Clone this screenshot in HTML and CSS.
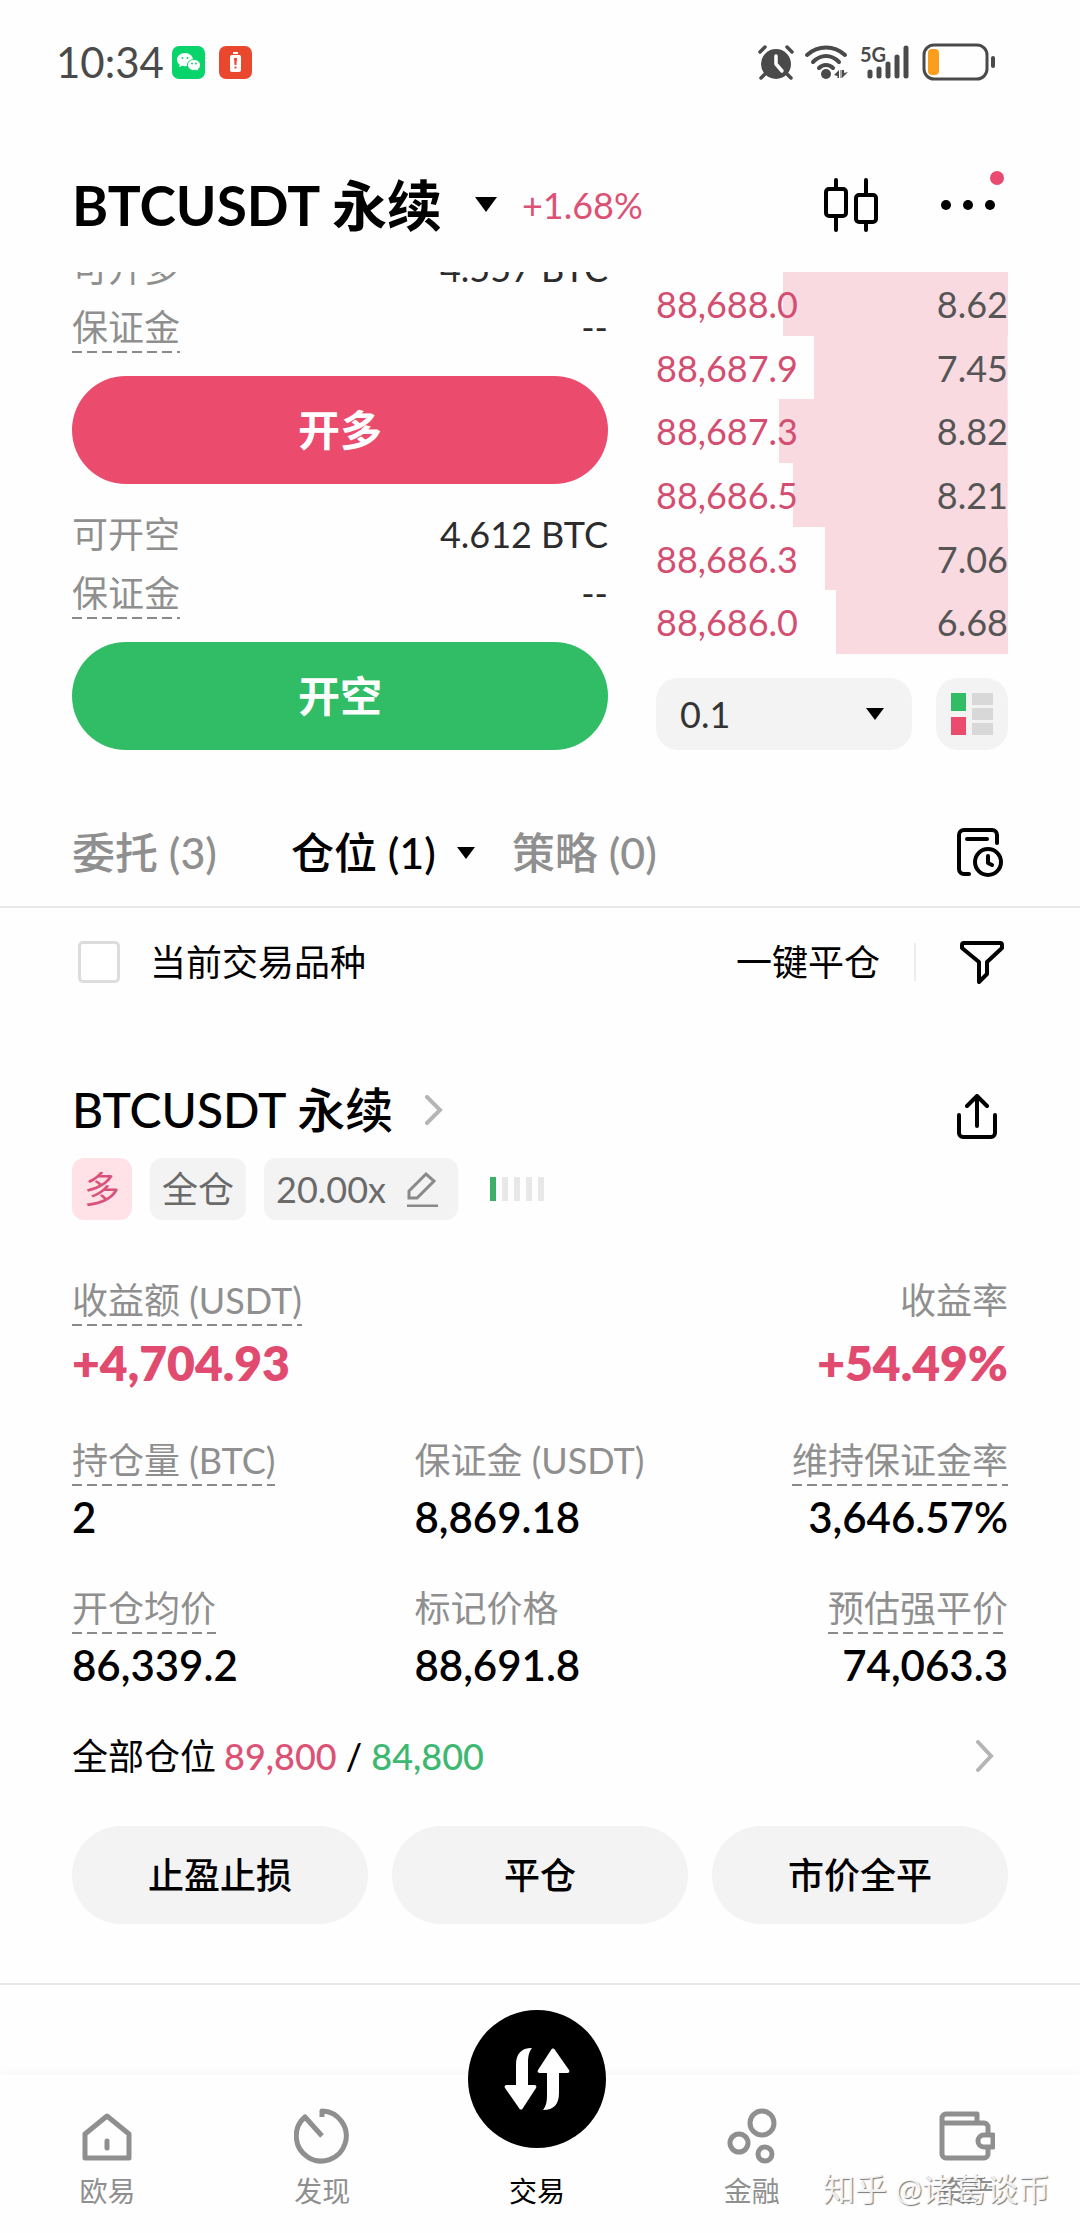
FILE: index.html
```html
<!DOCTYPE html>
<html lang="zh-CN">

<head>
    <meta charset="UTF-8">
    <meta name="viewport" content="width=device-width, initial-scale=1.0">
    <title>BTCUSDT 永续</title>
    <link rel="stylesheet" href="styles.css">
</head>

<body>
    <!-- 状态栏 -->
    <div class="status-bar">
        <span class="time">10:34</span>
        <svg class="app-icon" width="33" height="33" viewBox="0 0 33 33">
            <rect width="33" height="33" rx="7" fill="#07d46b" />
            <path d="M13 7c-4.600 0-8 3-8 6.700 0 2 1.100 3.700 2.800 5l-.7 2.600 3-1.500c.9.3 1.900.4 2.900.4 4.600 0 8-2.900 8-6.500S17.600 7 13 7z" fill="#fff" />
            <path d="M22 13.500c-3.600 0-6.500 2.400-6.500 5.500s2.900 5.500 6.500 5.500c.8 0 1.500-.1 2.200-.3l2.600 1.300-.6-2.200c1.500-1 2.300-2.600 2.300-4.300 0-3.100-2.900-5.500-6.500-5.500z" fill="#fff" stroke="#07d46b" stroke-width="1" />
            <g fill="#07d46b">
                <circle cx="10.500" cy="12" r="1" />
                <circle cx="15.500" cy="12" r="1" />
                <circle cx="20" cy="17.500" r=".9" />
                <circle cx="24" cy="17.500" r=".9" />
            </g>
        </svg>
        <svg class="app-icon alert" width="33" height="33" viewBox="0 0 33 33">
            <rect width="33" height="33" rx="7" fill="#e9482f" />
            <path d="M14 6h5v2h-5zM13 9h7a2 2 0 0 1 2 2v13a2 2 0 0 1-2 2h-7a2 2 0 0 1-2-2V11a2 2 0 0 1 2-2z" fill="#fff" />
            <path d="M15 12h3l-.6 7h-1.800zM15.500 20.500h2v2h-2z" fill="#e9482f" />
        </svg>
        <div class="status-right">
            <svg width="36" height="36" viewBox="0 0 36 36">
                <circle cx="18" cy="20" r="15" fill="#4a4a4a" />
                <path d="M2 8l5-5M34 8l-5-5M7 30l-4 4M29 30l4 4" stroke="#4a4a4a" stroke-width="3.500" stroke-linecap="round" />
                <path d="M18 12v8l6 7" fill="none" stroke="#fff" stroke-width="3.500" stroke-linecap="round" stroke-linejoin="round" />
            </svg>
            <svg width="46" height="36" viewBox="0 0 46 36">
                <g fill="none" stroke="#4a4a4a" stroke-width="4" stroke-linecap="round">
                    <path d="M3 11c11-10 27-10 38 0" />
                    <path d="M9 18c8-8 18-8 26 0" />
                    <path d="M15 24c4-4 10-4 14 0" />
                </g>
                <circle cx="22" cy="30" r="5" fill="#4a4a4a" />
                <path d="M35 26v8h-1.500v-2L30 31zM38 34v-8h2v3l4-1zM36.500 26h1v8h-1z" fill="#4a4a4a" />
            </svg>
            <svg width="52" height="36" viewBox="0 0 52 36">
                <text class="net-text" x="0" y="18">5G</text>
                <path d="M10 28v4M19 25v7M28 20v12M37 13v19M46 4v28" stroke="#4a4a4a" stroke-width="5" stroke-linecap="round" />
            </svg>
            <svg width="74" height="38" viewBox="0 0 74 38">
                <rect x="2" y="2" width="63" height="34" rx="10" fill="none" stroke="#4a4a4a" stroke-width="3" />
                <rect x="6" y="6" width="11" height="26" rx="4" fill="#fb9d1d" />
                <path d="M71 15v8" stroke="#4a4a4a" stroke-width="4" stroke-linecap="round" />
            </svg>
        </div>
    </div>

    <!-- 标题 -->
    <header class="header">
        <h1 class="symbol">BTCUSDT 永续</h1>
        <button type="button" class="icon-btn" aria-label="切换合约">
            <svg width="24" height="16" viewBox="0 0 24 16"><path d="M1 0h22L12 15z" /></svg>
        </button>
        <span class="change">+1.68%</span>
        <div class="header-right">
            <button type="button" class="icon-btn" aria-label="K线">
                <svg class="line-icon" width="54" height="54" viewBox="0 0 54 54" stroke-width="4">
                    <rect x="2" y="11" width="20" height="27" rx="3" />
                    <rect x="32" y="17" width="20" height="27" rx="3" />
                    <path d="M12 2v9M12 38v14M42 2v15M42 44v8" />
                </svg>
            </button>
            <button type="button" class="icon-btn more" aria-label="更多">
                <svg width="56" height="12" viewBox="0 0 56 12">
                    <circle cx="6" cy="6" r="5" />
                    <circle cx="28" cy="6" r="5" />
                    <circle cx="50" cy="6" r="5" />
                </svg>
                <span class="red-dot"></span>
            </button>
        </div>
    </header>

    <!-- 下单区 -->
    <section class="trade">
        <div class="order-form">
            <div class="form-rows">
                <div class="form-row"><span class="label">可开多</span><span>4.557 BTC</span></div>
                <div class="form-row"><span class="label dashed">保证金</span><span>--</span></div>
            </div>
            <button type="button" class="order-btn long">开多</button>
            <div class="form-rows">
                <div class="form-row"><span class="label">可开空</span><span>4.612 BTC</span></div>
                <div class="form-row"><span class="label dashed">保证金</span><span>--</span></div>
            </div>
            <button type="button" class="order-btn short">开空</button>
        </div>
        <div class="depth">
            <ul class="book">
                <li style="--depth: 64%"><span class="price">88,688.0</span><span>8.62</span></li>
                <li style="--depth: 55%"><span class="price">88,687.9</span><span>7.45</span></li>
                <li style="--depth: 65%"><span class="price">88,687.3</span><span>8.82</span></li>
                <li style="--depth: 61%"><span class="price">88,686.5</span><span>8.21</span></li>
                <li style="--depth: 52%"><span class="price">88,686.3</span><span>7.06</span></li>
                <li style="--depth: 49%"><span class="price">88,686.0</span><span>6.68</span></li>
            </ul>
            <div class="depth-tools">
                <div class="step">
                    <select aria-label="深度精度">
                        <option>0.1</option>
                        <option>1</option>
                        <option>10</option>
                    </select>
                    <svg class="step-caret" width="18" height="12" viewBox="0 0 18 12"><path d="M0 0h18L9 12z" /></svg>
                </div>
                <button type="button" class="layout-btn" aria-label="盘口布局">
                    <svg width="42" height="42" viewBox="0 0 42 42">
                        <path d="M0 0h15v18H0z" fill="#31bd65" />
                        <path d="M0 24h15v18H0z" fill="#eb4b6d" />
                        <path d="M21 0h21v12H21zM21 15h21v12H21zM21 30h21v12H21z" fill="#d8d8d8" />
                    </svg>
                </button>
            </div>
        </div>
    </section>

    <!-- 委托 / 仓位 / 策略 -->
    <nav class="tabs">
        <button type="button" class="tab">委托 (3)</button>
        <button type="button" class="tab active">仓位 (1)
            <svg width="20" height="12" viewBox="0 0 20 12"><path d="M1 0h18l-9 12z" /></svg>
        </button>
        <button type="button" class="tab">策略 (0)</button>
        <button type="button" class="icon-btn push" aria-label="历史记录">
            <svg class="line-icon" width="48" height="50" viewBox="0 0 48 50" stroke-width="4">
                <path d="M41 15V7a5 5 0 0 0-5-5H8a5 5 0 0 0-5 5v34a5 5 0 0 0 5 5h5" />
                <path d="M11 11h20" />
                <circle cx="32" cy="34" r="13" />
                <path d="M32 28v7l4 2" />
            </svg>
        </button>
    </nav>

    <div class="filter">
        <label class="only-current"><input type="checkbox">当前交易品种</label>
        <button type="button" class="text-btn push">一键平仓</button>
        <span class="divider"></span>
        <button type="button" class="icon-btn" aria-label="筛选">
            <svg class="line-icon" width="44" height="44" viewBox="0 0 44 44" stroke-width="4">
                <path d="M4 3h36a2 2 0 0 1 2 2v3L27 22v12l-8 8V22L2 8V5a2 2 0 0 1 2-2z" />
            </svg>
        </button>
    </div>

    <!-- 持仓卡片 -->
    <section class="position">
        <div class="position-head">
            <h2>BTCUSDT 永续</h2>
            <svg class="chevron" width="18" height="30" viewBox="0 0 18 30"><path d="M2 2l13 13L2 28" /></svg>
            <button type="button" class="icon-btn push share" aria-label="分享">
                <svg class="line-icon" width="42" height="46" viewBox="0 0 42 46" stroke-width="4">
                    <path d="M3 21v18a4 4 0 0 0 4 4h28a4 4 0 0 0 4-4V21" />
                    <path d="M21 32V3M11 12L21 2l10 10" />
                </svg>
            </button>
        </div>
        <div class="tags">
            <span class="tag tag-long">多</span>
            <span class="tag">全仓</span>
            <button type="button" class="tag lever">20.00x
                <svg width="32" height="36" viewBox="0 0 32 36" fill="none" stroke="#8a8a8a" stroke-width="3">
                    <path d="M3 20L20 3l8 7-17 17H3zM1 35h31" />
                </svg>
            </button>
            <span class="signal"><i class="on"></i><i></i><i></i><i></i><i></i></span>
        </div>

        <dl class="stats">
            <div class="stat big">
                <dt class="dashed">收益额 (USDT)</dt>
                <dd>+4,704.93</dd>
            </div>
            <div class="stat big last">
                <dt>收益率</dt>
                <dd>+54.49%</dd>
            </div>
            <div class="stat">
                <dt class="dashed">持仓量 (BTC)</dt>
                <dd>2</dd>
            </div>
            <div class="stat">
                <dt>保证金 (USDT)</dt>
                <dd>8,869.18</dd>
            </div>
            <div class="stat last">
                <dt class="dashed">维持保证金率</dt>
                <dd>3,646.57%</dd>
            </div>
            <div class="stat">
                <dt class="dashed">开仓均价</dt>
                <dd>86,339.2</dd>
            </div>
            <div class="stat">
                <dt>标记价格</dt>
                <dd>88,691.8</dd>
            </div>
            <div class="stat last">
                <dt class="dashed">预估强平价</dt>
                <dd>74,063.3</dd>
            </div>
        </dl>

        <a class="tpsl" href="#">
            <span>全部仓位</span>
            <span class="tpsl-price"><span class="red">89,800</span> / <span class="green">84,800</span></span>
            <svg class="chevron push" width="18" height="34" viewBox="0 0 18 34"><path d="M2 3l13 14L2 31" /></svg>
        </a>

        <div class="actions">
            <button type="button">止盈止损</button>
            <button type="button">平仓</button>
            <button type="button">市价全平</button>
        </div>
    </section>

    <!-- 底部导航 -->
    <nav class="tab-bar">
        <a href="#">
            <svg width="56" height="56" viewBox="0 0 56 56">
                <path d="M6 50V26L28 8l22 18v24z" />
                <path d="M28 33v7" stroke-linecap="round" />
            </svg>
            欧易
        </a>
        <a href="#">
            <svg width="56" height="56" viewBox="0 0 56 56">
                <path d="M28 9V3a25 25 0 1 1-17 6l17 19" />
            </svg>
            发现
        </a>
        <a href="#" class="current">
            <span class="trade-circle">
                <svg width="68" height="62" viewBox="0 0 68 62">
                    <path d="M29 0c-3 4-4 8-4 15v22h6c2 0 3 1 2 3L20 60c-1 2-3 2-4 0L2 40c-1-2 0-3 2-3h9V17C13 6 18 0 29 0z" />
                    <path d="M40 62c3-4 4-8 4-15V25h-7c-2 0-3-1-2-3L48 2c1-2 3-2 4 0l14 20c1 2 0 3-2 3h-8v20c0 11-5 17-16 17z" />
                </svg>
            </span>
            交易
        </a>
        <a href="#">
            <svg width="56" height="56" viewBox="0 0 56 56">
                <circle cx="38" cy="15" r="12" />
                <circle cx="15" cy="35" r="9" />
                <circle cx="41" cy="46" r="7" />
            </svg>
            金融
        </a>
        <a href="#">
            <svg width="56" height="56" viewBox="0 0 56 56">
                <path d="M49 26v-7a4 4 0 0 0-4-4H3M38 15V6H7a4 4 0 0 0-4 4v36a4 4 0 0 0 4 4h38a4 4 0 0 0 4-4v-7" />
                <path d="M54 27h-9a6 6 0 0 0 0 12h9z" />
            </svg>
            资产
        </a>
        <span class="watermark">知乎 @诸葛谈币</span>
    </nav>
</body>

</html>
```
FILE: styles.css
```css
* {
    padding: 0;
    margin: 0;
    box-sizing: border-box;
}

body {
    display: flex;
    flex-direction: column;
    min-height: 100vh;
    background-color: #fefefe;
    color: #000;
    font-family: Lato, "Noto Sans CJK SC", sans-serif;
    font-size: 36px;
    line-height: 52px;
}

button,
select {
    border: 0;
    background: none;
    color: inherit;
    font: inherit;
    cursor: pointer;
}

a {
    color: inherit;
    text-decoration: none;
}

svg {
    display: block;
    flex: none;
}

.push {
    margin-left: auto;
}

.icon-btn {
    display: flex;
    align-items: center;
}

.line-icon {
    fill: none;
    stroke: #000;
    stroke-linecap: round;
    stroke-linejoin: round;
}

.chevron path {
    fill: none;
    stroke: #b5b5b5;
    stroke-width: 4;
    stroke-linecap: round;
}

.red {
    color: #dc5275;
}

.green {
    color: #3db870;
}

/* 状态栏 */
.status-bar {
    display: flex;
    align-items: center;
    height: 124px;
    padding: 0 84px 0 56px;
}

.time {
    font-size: 42px;
    color: #4a4a4a;
}

.app-icon {
    margin-left: 8px;
}

.app-icon.alert {
    margin-left: 14px;
}

.status-right {
    display: flex;
    align-items: center;
    gap: 10px;
    margin-left: auto;
}

.status-right svg {
    overflow: visible;
}

.net-text {
    font-size: 20px;
    font-weight: 700;
    fill: #4a4a4a;
}

/* 标题 */
.header {
    display: flex;
    align-items: center;
    height: 148px;
    padding: 14px 84px 0 72px;
}

.symbol {
    margin-right: 32px;
    font-size: 55px;
    font-weight: 700;
}

.change {
    margin-left: 24px;
    color: #dc5275;
}

.header-right {
    display: flex;
    align-items: center;
    gap: 62px;
    margin-left: auto;
}

.more {
    position: relative;
}

.red-dot {
    position: absolute;
    top: -28px;
    right: -8px;
    width: 14px;
    height: 14px;
    border-radius: 50%;
    background-color: #e94b70;
}

/* 下单区 */
.trade {
    display: grid;
    grid-template-columns: 536fr 352fr;
    gap: 48px;
    padding: 0 72px;
    overflow: hidden;
}

/* 已向上滚动，首行只露出一部分 */
.order-form {
    margin-top: -34px;
}

.form-rows {
    padding: 20px 0;
}

.order-form .form-rows:first-child {
    padding-top: 0;
}

.form-row {
    display: flex;
    justify-content: space-between;
    align-items: center;
    height: 59px;
    color: #2c2c2c;
}

.label {
    color: #8f8f8f;
}

.dashed {
    background: repeating-linear-gradient(90deg, #8a8a8a 0 10px, transparent 10px 15px) left bottom / 100% 2px no-repeat;
}

.order-btn {
    display: block;
    width: 100%;
    height: 108px;
    border-radius: 54px;
    color: #fff;
    font-size: 42px;
    font-weight: 700;
}

.long {
    background-color: #eb4b6d;
}

.short {
    background-color: #31bd65;
}

.depth {
    display: flex;
    flex-direction: column;
    gap: 24px;
}

.book {
    display: flex;
    flex: 1;
    flex-direction: column;
    list-style: none;
}

.book li {
    display: flex;
    flex: 1;
    justify-content: space-between;
    align-items: center;
    color: #555;
    background: linear-gradient(#f9dae1, #f9dae1) right top / var(--depth) 100% no-repeat;
}

.book .price {
    color: #d34e70;
}

.depth-tools {
    display: flex;
    gap: 24px;
}

.step {
    position: relative;
    flex: 1;
}

.step select {
    width: 100%;
    height: 72px;
    padding: 0 24px;
    border-radius: 22px;
    background-color: #f3f3f3;
    color: #333;
    appearance: none;
}

.step-caret {
    position: absolute;
    top: 30px;
    right: 28px;
    pointer-events: none;
}

.layout-btn {
    display: flex;
    justify-content: center;
    align-items: center;
    width: 72px;
    height: 72px;
    border-radius: 22px;
    background-color: #f3f3f3;
}

/* 选项卡 */
.tabs {
    display: flex;
    align-items: center;
    padding: 50px 76px 0 72px;
    height: 158px;
    border-bottom: 2px solid #e9e9e9;
}

.tab {
    display: flex;
    align-items: center;
    gap: 20px;
    margin-right: 74px;
    color: #8f8f8f;
    font-size: 43px;
    font-weight: 500;
}

.tab.active {
    margin-right: 36px;
    color: #000;
}

.filter {
    display: flex;
    align-items: center;
    height: 108px;
    padding: 0 76px 0 78px;
}

.only-current {
    display: flex;
    align-items: center;
    gap: 30px;
}

.only-current input {
    width: 42px;
    height: 42px;
    border: 3px solid #dcdcdc;
    border-radius: 5px;
    background-color: #fff;
    appearance: none;
}

.divider {
    width: 2px;
    height: 38px;
    margin: 0 44px 0 34px;
    background-color: #ececec;
}

/* 持仓卡片 */
.position {
    padding: 50px 72px 59px;
    border-bottom: 2px solid #e9e9e9;
}

.position-head {
    display: flex;
    align-items: center;
    height: 88px;
}

.position-head h2 {
    margin-right: 32px;
    font-size: 48px;
    font-weight: 500;
}

.share {
    padding: 14px 10px 0 0;
}

.tags {
    display: flex;
    align-items: center;
    gap: 18px;
    margin: 4px 0 54px;
}

.tag {
    display: flex;
    align-items: center;
    height: 62px;
    padding: 0 12px;
    border-radius: 12px;
    background-color: #f3f3f3;
    color: #6a6a6a;
}

.tag-long {
    background-color: #ffe2e8;
    color: #d8527a;
}

.lever {
    gap: 20px;
    padding-right: 20px;
}

.signal {
    display: flex;
    gap: 6px;
    margin-left: 14px;
}

.signal i {
    width: 6px;
    height: 24px;
    background-color: #e8e8e8;
}

.signal .on {
    background-color: #3db067;
}

.stats {
    display: grid;
    grid-template-columns: 15fr 13fr 13fr;
    row-gap: 34px;
}

.stat {
    display: flex;
    flex-direction: column;
    align-items: flex-start;
    white-space: nowrap;
}

.stat.last {
    grid-column: 3;
    align-items: flex-end;
}

.stat dt {
    color: #8f8f8f;
}

.stat dd {
    font-size: 42px;
    font-weight: 600;
    line-height: 62px;
}

.stat.big dd {
    color: #e14b6f;
    font-size: 48px;
    font-weight: 800;
    line-height: 74px;
}

.tpsl {
    display: flex;
    align-items: center;
    gap: 8px;
    margin-top: 30px;
    padding-right: 14px;
    line-height: 60px;
}

.tpsl-price {
    font-weight: 500;
}

.actions {
    display: grid;
    grid-template-columns: repeat(3, 1fr);
    gap: 24px;
    margin-top: 40px;
}

.actions button {
    height: 98px;
    border-radius: 49px;
    background-color: #f3f3f3;
    font-weight: 500;
}

/* 底部导航 */
.tab-bar {
    position: relative;
    display: flex;
    align-items: flex-end;
    margin-top: auto;
    padding: 33px 6px 24px 0;
    box-shadow: 0 -2px 10px rgba(0, 0, 0, .03);
}

.tab-bar a {
    display: flex;
    flex: 1;
    flex-direction: column;
    align-items: center;
    gap: 9px;
    color: #8f8f8f;
    font-size: 28px;
    line-height: 36px;
}

.tab-bar a > svg {
    fill: none;
    stroke: #8f8f8f;
    stroke-width: 5;
    stroke-linejoin: round;
}

.tab-bar .current {
    gap: 25px;
    margin-top: -100px;
    color: #000;
}

.trade-circle {
    display: flex;
    justify-content: center;
    align-items: center;
    width: 138px;
    height: 138px;
    border-radius: 50%;
    background-color: #000;
}

.trade-circle svg {
    fill: #fff;
}

.watermark {
    position: absolute;
    right: 30px;
    bottom: 24px;
    color: rgba(255, 255, 255, .9);
    font-size: 32px;
    line-height: 40px;
    text-shadow: 1px 1px 1px #777;
}
```
